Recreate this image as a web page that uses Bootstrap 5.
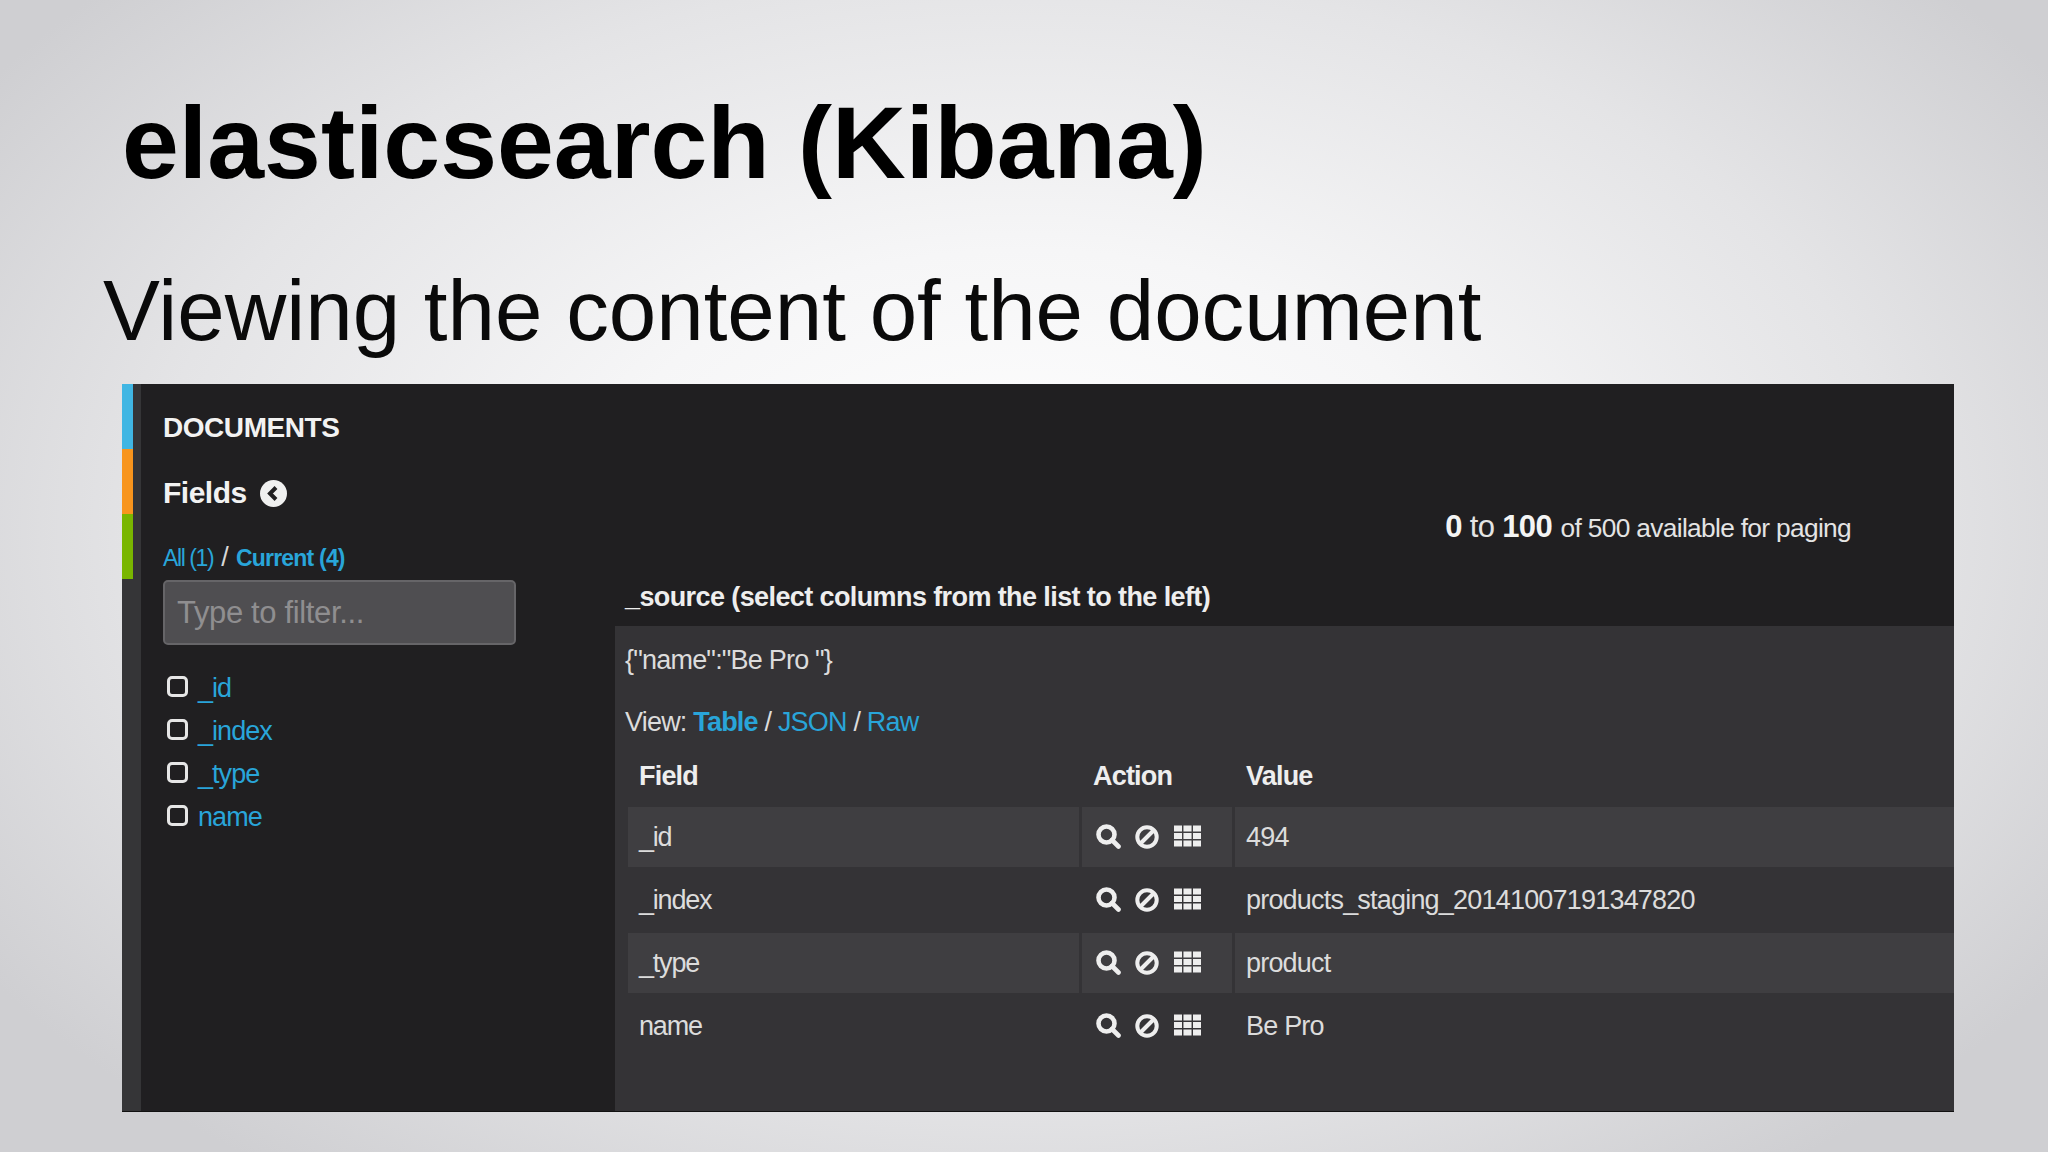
<!DOCTYPE html>
<html lang="en">
<head>
<meta charset="utf-8">
<title>elasticsearch (Kibana)</title>
<link href="https://cdn.jsdelivr.net/npm/bootstrap@5.3.0/dist/css/bootstrap.min.css" rel="stylesheet">
<style>
html,body{margin:0;height:100%;overflow:hidden;background:#ddd}
body{font-family:"Liberation Sans",Arial,sans-serif}
.slide-wrap{width:2048px;height:1152px;background:radial-gradient(ellipse 1250px 800px at 50% 46%,#fff 0%,#f6f6f7 35%,#e4e4e6 70%,#cfcfd2 100%);overflow:hidden}
.slide-title{font-weight:700;font-size:102.2px;line-height:110px;color:#000;margin:0;padding:88px 0 0 122px}
.slide-sub{font-size:85.3px;line-height:96px;color:#0a0a0a;margin:0;padding:65px 0 0 103px}
.kb-panel{margin:25px 0 0 122px;width:1832px;height:728px;background:#201f21;color:#e9e9ea;border-bottom:1px solid #111}
.kb-rail{width:19px;background:#353537;flex:none}
.kb-stripe{width:11px;height:65px}
.st-a{background:#40b6e3}.st-b{background:#f8951d}.st-c{background:#79b600}
.kb-side{width:474px;flex:none;padding:0 0 0 22px}
.kb-h{font-size:28px;font-weight:700;line-height:32px;letter-spacing:-.45px;color:#f2f2f2}
.kb-docs{margin-top:28px}
.kb-fields{margin-top:33px;font-size:30px;letter-spacing:-.5px;display:flex;align-items:center;gap:13px}
.kb-tabs{margin-top:36px;font-size:23px;line-height:26px;letter-spacing:-.8px;color:#d8d8d8;display:flex;align-items:center;gap:8px}
.kb-tabs a,.kb-list a,.kb-view a{color:#29a5d9;text-decoration:none}
.kb-tabs .kb-all{letter-spacing:-1.4px}
.kb-tabs .kb-sep{font-size:27px;line-height:26px;margin-top:-3px}
.kb-filter{display:block;margin-top:9px;width:353px;height:65px;background:#4f4e51;border:2px solid #666568;border-radius:5px;color:#8f8e90;font-size:31px;padding:0 12px;letter-spacing:-.35px}
.kb-filter::placeholder{color:#8f8e90;opacity:1}
.kb-filter:focus{outline:0}
.kb-list{list-style:none;margin:22px 0 0;padding:0 0 0 4px;font-size:27px;letter-spacing:-.95px}
.kb-list li{height:43px;display:flex;align-items:center;gap:10px}
.kb-box{width:21px;height:21px;border:3px solid #e6e6e6;border-radius:5px;flex:none;margin-top:-4px}
.kb-right{flex:1;min-width:0}
.kb-paging{text-align:right;padding:127px 103px 0 0;font-size:26.3px;line-height:32px;letter-spacing:-.67px;color:#e4e4e4}
.kb-range{font-size:31px;line-height:1;margin-right:2px}
.kb-range b{color:#f4f4f4}
.kb-source{font-size:27px;font-weight:700;line-height:32px;letter-spacing:-.6px;padding:37px 0 0 10px;height:82px;color:#eee}
.kb-main{background:#343336;flex:1;padding-left:10px;overflow:hidden;font-size:27px;letter-spacing:-.8px;color:#dcdcdc}
.kb-json{margin-top:18px;line-height:32px;white-space:pre}
.kb-view{margin-top:30px;line-height:32px}
.kb-table{border-collapse:separate;border-spacing:3px 3px;width:1400px;margin:19px 0 0 0;table-layout:fixed}
.kb-table th{font-weight:700;color:#eee;padding:0 0 12px 11px;line-height:32px;letter-spacing:-.8px}
.kb-table td{height:60px;padding:0 0 0 11px;vertical-align:middle;line-height:32px}
.kb-table td:first-child{letter-spacing:-1.2px}
.kb-table tr.odd td{background:#3f3e41}
.kb-acts{display:flex;align-items:center;gap:14px;padding-left:3px}
.kb-acts svg{display:block;flex:none;margin-top:-1px}
.kb-acts svg:last-child{margin-left:1px;margin-top:-2px}
</style>
</head>
<body>
<svg width="0" height="0" class="d-block">
  <symbol id="ic-search" viewBox="0 0 25 25"><circle cx="10.5" cy="10.5" r="8" fill="none" stroke="#eee" stroke-width="4.6"/><path d="M16 16 22.5 22.5" stroke="#eee" stroke-width="4.6" stroke-linecap="round"/></symbol>
  <symbol id="ic-ban" viewBox="0 0 24 24"><circle cx="12" cy="12" r="9.7" fill="none" stroke="#eee" stroke-width="4"/><path d="M5.5 18.5 18.5 5.5" stroke="#eee" stroke-width="4"/></symbol>
  <symbol id="ic-grid" viewBox="0 0 28 22"><path fill="#eee" d="M0 0h8.3v6.3H0zM9.8 0h8.4v6.3H9.8zM19.7 0H28v6.3h-8.3zM0 7.8h8.3v6.4H0zM9.8 7.8h8.4v6.4H9.8zM19.7 7.8H28v6.4h-8.3zM0 15.7h8.3V22H0zM9.8 15.7h8.4V22H9.8zM19.7 15.7H28V22h-8.3z"/></symbol>
</svg>
<div class="slide-wrap d-flex flex-column">
  <h1 class="slide-title">elasticsearch (Kibana)</h1>
  <p class="slide-sub">Viewing the content of the document</p>
  <div class="kb-panel d-flex">
    <div class="kb-rail">
      <div class="kb-stripe st-a"></div><div class="kb-stripe st-b"></div><div class="kb-stripe st-c"></div>
    </div>
    <div class="kb-side">
      <div class="kb-h kb-docs">DOCUMENTS</div>
      <div class="kb-h kb-fields">Fields
        <svg width="27" height="27" viewBox="0 0 27 27"><circle cx="13.5" cy="13.5" r="13.5" fill="#f0f0f0"/><path d="M16 7.5 10 13.5l6 6" fill="none" stroke="#201f21" stroke-width="4"/></svg>
      </div>
      <div class="kb-tabs"><a href="#" class="kb-all">All (1)</a><span class="kb-sep">/</span><a href="#" class="fw-bold">Current (4)</a></div>
      <input class="kb-filter" type="text" placeholder="Type to filter...">
      <ul class="kb-list">
        <li><span class="kb-box"></span><a href="#">_id</a></li>
        <li><span class="kb-box"></span><a href="#">_index</a></li>
        <li><span class="kb-box"></span><a href="#">_type</a></li>
        <li><span class="kb-box"></span><a href="#">name</a></li>
      </ul>
    </div>
    <div class="kb-right d-flex flex-column">
      <div class="kb-paging"><span class="kb-range"><b>0</b> to <b>100</b></span> of 500 available for paging</div>
      <div class="kb-source">_source (select columns from the list to the left)</div>
      <div class="kb-main">
        <div class="kb-json">{"name":"Be Pro "}</div>
        <div class="kb-view">View: <a href="#" class="fw-bold">Table</a> / <a href="#">JSON</a> / <a href="#">Raw</a></div>
        <table class="kb-table">
          <colgroup><col style="width:451px"><col style="width:150px"><col></colgroup>
          <thead><tr><th>Field</th><th>Action</th><th>Value</th></tr></thead>
          <tbody>
            <tr class="odd"><td>_id</td><td><div class="kb-acts"><svg width="25" height="25"><use href="#ic-search"/></svg><svg width="24" height="24"><use href="#ic-ban"/></svg><svg width="27" height="22"><use href="#ic-grid"/></svg></div></td><td>494</td></tr>
            <tr><td>_index</td><td><div class="kb-acts"><svg width="25" height="25"><use href="#ic-search"/></svg><svg width="24" height="24"><use href="#ic-ban"/></svg><svg width="27" height="22"><use href="#ic-grid"/></svg></div></td><td>products_staging_20141007191347820</td></tr>
            <tr class="odd"><td>_type</td><td><div class="kb-acts"><svg width="25" height="25"><use href="#ic-search"/></svg><svg width="24" height="24"><use href="#ic-ban"/></svg><svg width="27" height="22"><use href="#ic-grid"/></svg></div></td><td>product</td></tr>
            <tr><td>name</td><td><div class="kb-acts"><svg width="25" height="25"><use href="#ic-search"/></svg><svg width="24" height="24"><use href="#ic-ban"/></svg><svg width="27" height="22"><use href="#ic-grid"/></svg></div></td><td>Be Pro</td></tr>
          </tbody>
        </table>
      </div>
    </div>
  </div>
</div>
<script src="https://cdn.jsdelivr.net/npm/bootstrap@5.3.0/dist/js/bootstrap.bundle.min.js"></script>
</body>
</html>
